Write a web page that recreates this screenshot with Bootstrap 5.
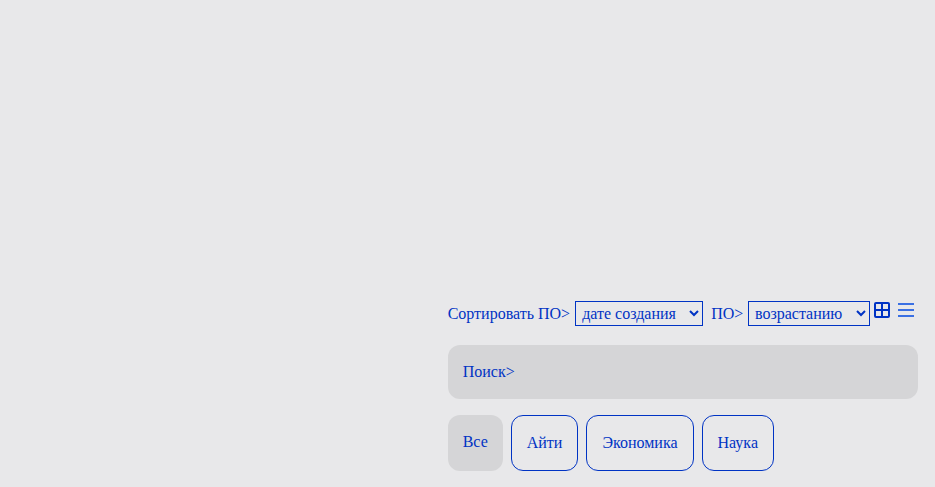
<!DOCTYPE html>
<html lang="ru">
<head>
<meta charset="utf-8">
<meta name="viewport" content="width=device-width, initial-scale=1">
<title>Поиск</title>
<link href="https://cdn.jsdelivr.net/npm/bootstrap@5.3.0/dist/css/bootstrap.min.css" rel="stylesheet">
<style>
body{background:#e8e8ea;color:#0033c4;font:16px/18px "Liberation Serif",serif;height:487px;overflow:hidden}
.filters{width:470px;margin-right:17.35px;padding-bottom:16px}
.sort-row{height:25px;margin-bottom:19px}
.sort-select{height:25px;border:1px solid #0033c4;background:transparent;color:#0033c4;padding:2px;border-radius:0;font:inherit;outline:0}
.by-date{width:128px;margin-left:5px;margin-right:8px}
.by-order{width:122px;margin-left:4.7px;margin-right:4px}
.view-icon{width:16px;height:16px;margin-top:1px;flex:none}
.search-box{height:54px;border-radius:12px;background:#d5d5d7;color:#0033c4;padding:0 15px 1px;border:0;font:inherit;outline:0}
.search-box::placeholder{color:#0033c4;opacity:1}
.tag{height:56px;border-radius:12px;border:1px solid #0033c4;background:transparent;color:#0033c4;padding:0 15px;font:inherit}
.tag-active{background:#d5d5d7;border:0;padding:0 15px 2px}
</style>
</head>
<body>
<main class="d-flex h-100 justify-content-end align-items-end">
  <section class="filters">
    <div class="sort-row d-flex align-items-start text-nowrap">
      <label for="date" class="pt-1">Сортировать ПО&gt;</label>
      <select id="date" class="sort-select by-date"><option>дате создания</option></select>
      <label for="order" class="pt-1">ПО&gt;</label>
      <select id="order" class="sort-select by-order"><option>возрастанию</option></select>
      <svg class="view-icon me-2" viewBox="0 0 16 16" fill="none" stroke="#0033c4" stroke-width="2"><rect x="1" y="1" width="14" height="14" rx="1"/><path d="M8 1v14M1 8h14"/></svg>
      <svg class="view-icon" viewBox="0 0 16 16" stroke="#3b70e3" stroke-width="2"><path d="M0 2h16M0 8h16M0 14h16"/></svg>
    </div>
    <input class="search-box d-block w-100 mb-3" type="text" placeholder="Поиск&gt;" aria-label="Поиск">
    <div class="d-flex gap-2">
      <button class="tag tag-active">Все</button>
      <button class="tag">Айти</button>
      <button class="tag">Экономика</button>
      <button class="tag">Наука</button>
    </div>
  </section>
</main>
<script src="https://cdn.jsdelivr.net/npm/bootstrap@5.3.0/dist/js/bootstrap.bundle.min.js"></script>
</body>
</html>
